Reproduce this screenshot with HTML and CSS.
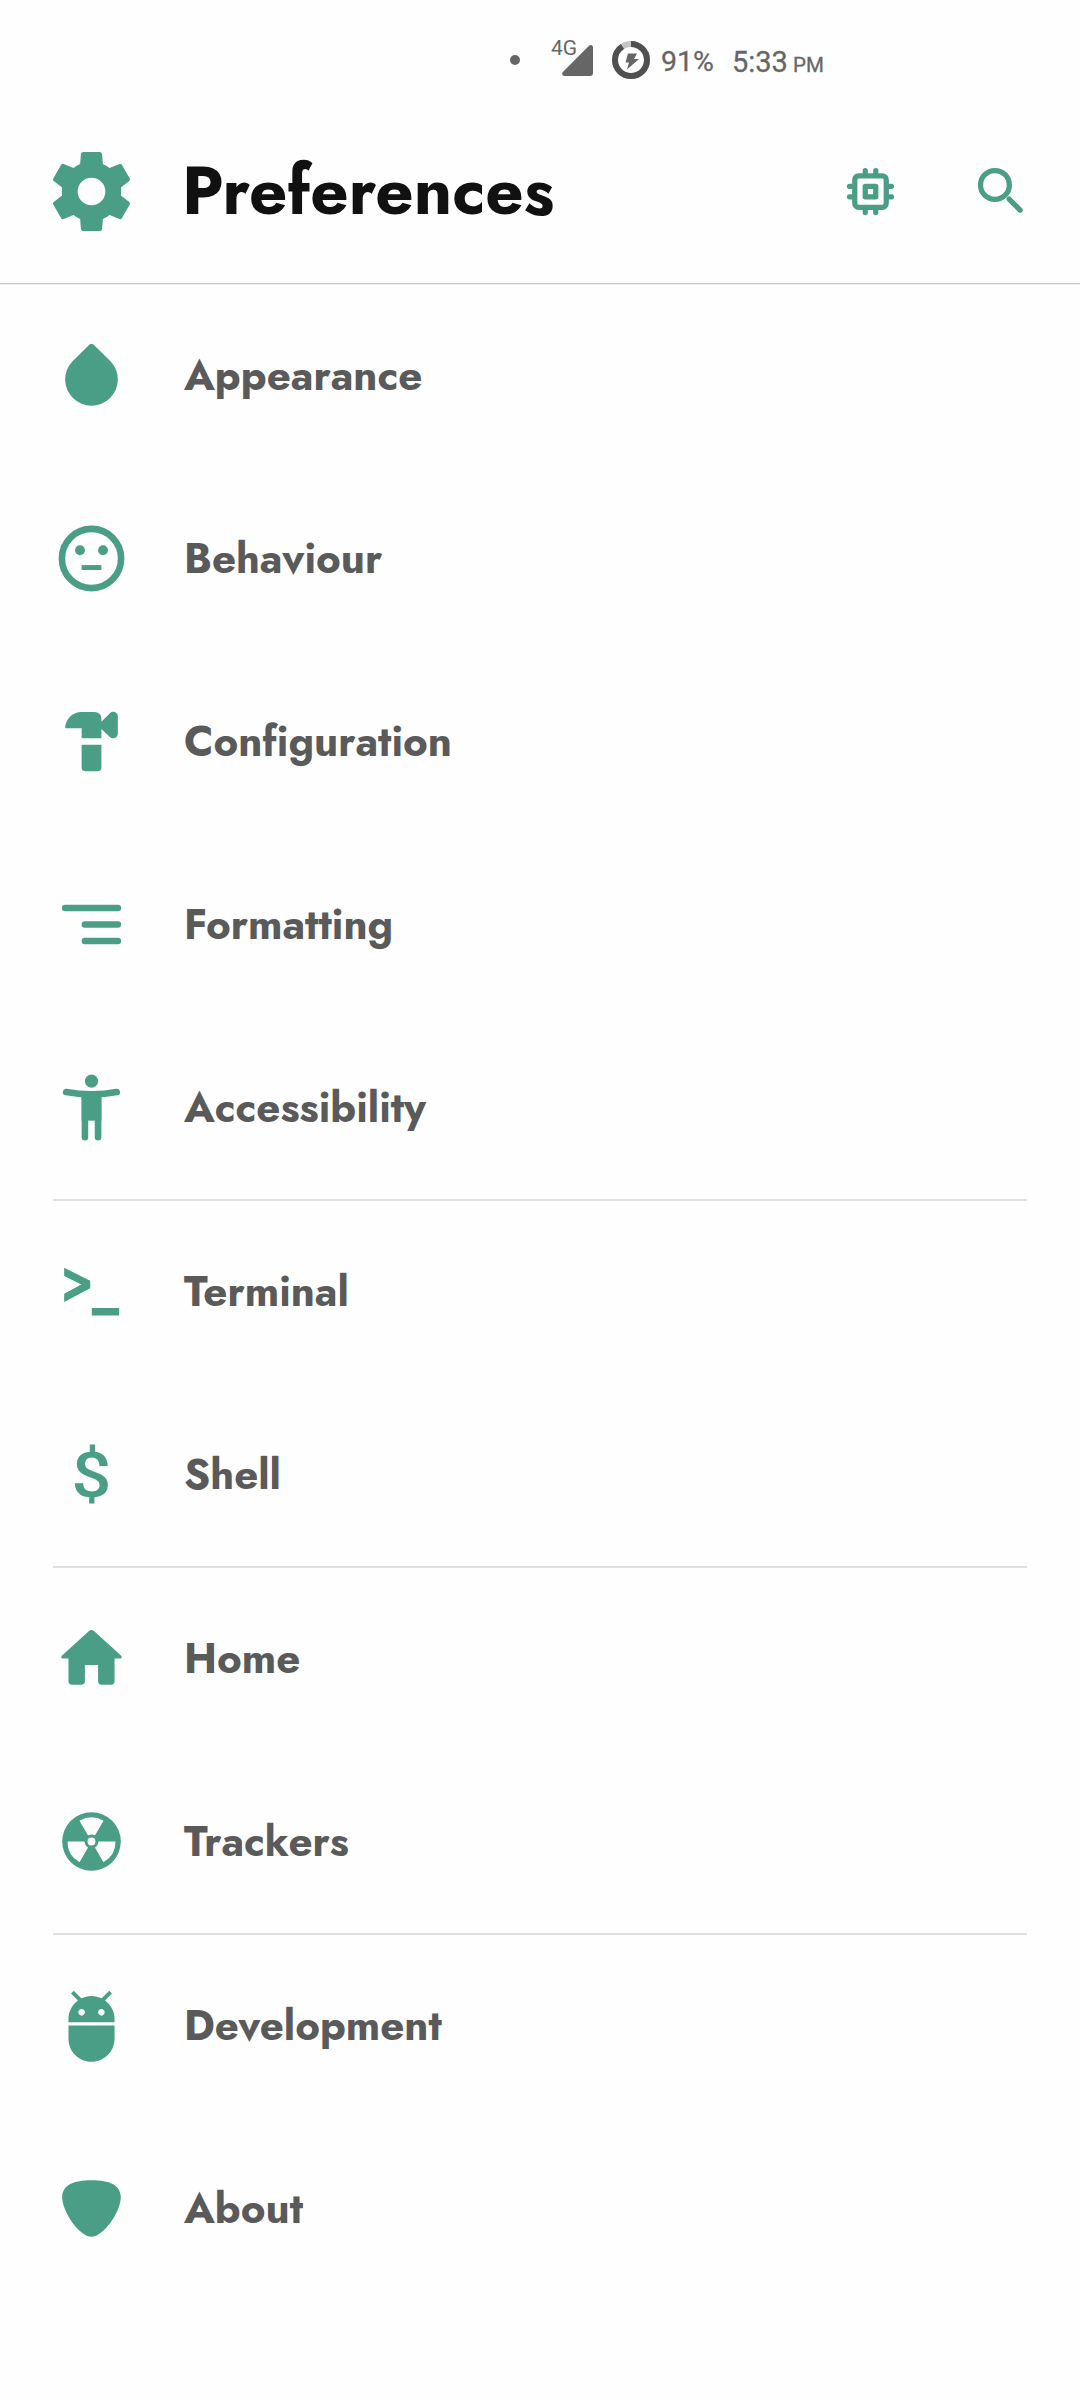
FILE: index.html
```html
<!DOCTYPE html>
<html lang="en">
<head>
<meta charset="utf-8">
<title>Preferences</title>
<link rel="stylesheet" href="styles.css">
</head>
<body>
<div class="status">
  <svg class="dot" viewBox="0 0 10 10"><circle cx="5" cy="5" r="5"/></svg>
  <div class="signal">
    <span class="network">4G</span>
    <svg viewBox="0 0 31 31"><path d="M27 .8C28.700-.6 31 .2 31 2.500V28a3 3 0 0 1-3 3H2.500C.2 31-.6 28.700.8 27z"/></svg>
  </div>
  <svg class="battery" viewBox="0 0 38 38"><circle class="track" cx="19" cy="19" r="16"/><circle class="charge" cx="19" cy="19" r="16" pathLength="100"/><path d="M16 12.500h9l-3 5.500h5L15 28.500l2-7h-3.500z"/></svg>
  <span class="percent">91%</span>
  <span class="time">5:33</span><span class="ampm">PM</span>
</div>
<header class="header">
  <svg class="gear" viewBox="0 0 24 24"><path d="M19.430 12.980c.04-.32.07-.64.07-.98s-.03-.66-.07-.98l2.110-1.650c.19-.15.24-.42.12-.64l-2-3.460c-.12-.22-.39-.3-.61-.22l-2.490 1c-.52-.4-1.080-.73-1.690-.98l-.18-2.350C14.650 2.280 14.450 2 14 2h-4c-.45 0-.65.28-.69.72l-.18 2.350c-.61.25-1.170.59-1.690.98l-2.490-1c-.23-.09-.49 0-.61.22l-2 3.460c-.13.22-.07.49.12.64l2.110 1.650c-.04.32-.07.65-.07.98s.03.66.07.98l-2.110 1.650c-.19.15-.24.42-.12.64l2 3.460c.12.22.39.3.61.22l2.490-1c.52.4 1.080.73 1.690.98l.18 2.350c.04.44.24.72.69.72h4c.45 0 .65-.28.69-.72l.18-2.350c.61-.25 1.170-.59 1.690-.98l2.490 1c.23.09.49 0 .61-.22l2-3.460c.12-.22.07-.49-.12-.64zM12 15.500a3.500 3.500 0 1 1 0-7 3.500 3.500 0 0 1 0 7z"/></svg>
  <h1 class="title">Preferences</h1>
  <svg class="action" viewBox="0 0 24 24"><g class="line"><rect x="6" y="6" width="12" height="12" rx="1.500"/><path d="M10 4v1M14 4v1M10 19v1M14 19v1M4 10h1M4 14h1M19 10h1M19 14h1"/></g><path fill-rule="evenodd" d="M10 9h4a1 1 0 0 1 1 1v4a1 1 0 0 1-1 1h-4a1 1 0 0 1-1-1v-4a1 1 0 0 1 1-1zm1 2v2h2v-2z"/></svg>
  <svg class="action search" viewBox="0 0 24 24"><g class="line"><circle cx="9.500" cy="9.500" r="5.500"/><path d="M14.900 14.900l4.200 4.200"/></g></svg>
</header>
<main>
  <section class="group">
    <div class="row"><svg viewBox="0 0 24 24"><path d="M17.900 7.800L12.600 2.600q-.6-.5-1.200 0L6.100 7.800A8 8 0 1 0 17.900 7.800z"/></svg><span>Appearance</span></div>
    <div class="row"><svg viewBox="0 0 24 24"><circle class="ring" cx="12" cy="12" r="9"/><circle cx="8.500" cy="9.500" r="1.500"/><circle cx="15.500" cy="9.500" r="1.500"/><path d="M9 14h6v1.500H9z"/></svg><span>Behaviour</span></div>
    <div class="row"><svg viewBox="0 0 24 24"><path d="M13 3H9C6.200 3 4 5.200 4 8h5v3h6V8.200l2.600 2.400c.9.9 2.400.3 2.400-1V4.400c0-1.300-1.500-1.900-2.400-1L15 6V5a2 2 0 0 0-2-2zM9 13h6v7a1 1 0 0 1-1 1h-4a1 1 0 0 1-1-1z"/></svg><span>Configuration</span></div>
    <div class="row"><svg viewBox="0 0 24 24"><path class="line" d="M4 7h16M10 12h10M10 17h10"/></svg><span>Formatting</span></div>
    <div class="row"><svg viewBox="0 0 24 24"><circle cx="12" cy="4" r="2"/><path class="line" d="M4.300 7.300Q8 8 12 8t7.700-.7M10 9v12M14 9v12"/><path d="M9 8h6v8H9z"/></svg><span>Accessibility</span></div>
  </section>
  <section class="group">
    <div class="row"><svg viewBox="0 0 24 24"><path d="M3.700 4.800l7.900 3.900V11l-7.900 4.200v-2.500l5.200-2.800-5.200-2.600zM12.100 17h8.300v2.300h-8.300z"/></svg><span>Terminal</span></div>
    <div class="row"><svg viewBox="0 0 24 24"><text class="dollar" transform="translate(12 18.700) scale(1.120 1)">$</text></svg><span>Shell</span></div>
  </section>
  <section class="group">
    <div class="row"><svg viewBox="0 0 24 24"><path d="M10 19v-5h4v5c0 .55.45 1 1 1h3c.55 0 1-.45 1-1v-7h1.700c.46 0 .68-.57.33-.87L12.670 3.600c-.38-.34-.96-.34-1.340 0l-8.360 7.530c-.34.3-.13.87.33.87H5v7c0 .55.45 1 1 1h3c.55 0 1-.45 1-1z"/></svg><span>Home</span></div>
    <div class="row"><svg viewBox="0 0 24 24"><path fill-rule="evenodd" d="M3.100 12a8.900 8.900 0 1 1 17.800 0 8.900 8.900 0 1 1-17.800 0zM8.350 5.680A7.300 7.300 0 0 1 15.650 5.680L13.050 10.180A2.100 2.100 0 0 0 10.950 10.180zM4.700 12A7.300 7.300 0 0 0 8.350 18.320L10.950 13.820A2.100 2.100 0 0 1 9.900 12zM19.300 12A7.300 7.300 0 0 1 15.650 18.320L13.050 13.820A2.100 2.100 0 0 0 14.100 12zM10.800 12a1.200 1.200 0 1 0 2.400 0 1.200 1.200 0 1 0-2.400 0z"/></svg><span>Trackers</span></div>
  </section>
  <section class="group">
    <div class="row"><svg viewBox="0 0 24 24"><path d="M5 16c0 3.870 3.130 7 7 7s7-3.130 7-7v-4H5v4zM16.120 4.370l2.100-2.100-.82-.83-2.300 2.310C14.160 3.280 13.120 3 12 3s-2.160.28-3.090.75L6.600 1.440l-.82.83 2.100 2.100C6.140 5.640 5 7.680 5 10v1h14v-1c0-2.320-1.140-4.360-2.880-5.630zM9 9c-.55 0-1-.45-1-1s.45-1 1-1 1 .45 1 1-.45 1-1 1zm6 0c-.55 0-1-.45-1-1s.45-1 1-1 1 .45 1 1-.45 1-1 1z"/></svg><span>Development</span></div>
    <div class="row"><svg viewBox="0 0 24 24"><path d="M12 3.400c5.400 0 8.900 1.400 8.900 5.200 0 4.400-5.200 12-8.900 12s-8.900-7.600-8.900-12c0-3.800 3.500-5.200 8.900-5.200z"/></svg><span>About</span></div>
  </section>
</main>
</body>
</html>
```
FILE: styles.css
```css
body {
  margin: 0;
  width: 1080px;
  height: 2400px;
  overflow: hidden;
  background: #fefefe;
  color: #5a5a5a;
  font-family: Jost, Lato, "Open Sans", sans-serif;
}
svg { display: block; flex: none; fill: #4a9e86; }
.line, .ring { fill: none; stroke: #4a9e86; stroke-width: 2; stroke-linecap: round; }

.status {
  box-sizing: border-box;
  height: 100px;
  padding: 39px 0 0 510px;
  display: flex;
  align-items: flex-start;
  font-family: Roboto, sans-serif;
  color: #666;
}
.status svg { fill: #666; }
.status span { line-height: 46px; white-space: nowrap; }
.dot { width: 10px; height: 10px; margin-top: 16px; }
.signal { position: relative; margin: 6px 0 0 42px; width: 31px; height: 31px; }
.signal svg { width: 31px; height: 31px; }
.status .network { position: absolute; left: -11px; top: -8px; font-size: 21px; line-height: 22px; }
.battery { width: 38px; height: 38px; margin: 2px 0 0 19px; }
.battery circle { fill: none; stroke-width: 6; }
.battery .track { stroke: #c4c4c4; }
.battery .charge { stroke: #505050; stroke-dasharray: 91 9; transform: rotate(-90deg); transform-origin: 19px 19px; }
.percent { width: 71px; margin-left: 11px; font-size: 28.5px; -webkit-text-stroke: 0.3px #666; }
.time { width: 61px; font-size: 29px; -webkit-text-stroke: 0.3px #666; }
.ampm { padding-top: 3px; font-size: 20.5px; -webkit-text-stroke: 0.3px #666; }

.header {
  box-sizing: border-box;
  height: 184px;
  padding-left: 44px;
  border-bottom: 1px solid #c9c9c9;
  box-shadow: 0 1px 0 #ededed;
  display: flex;
  align-items: center;
}
.gear { width: 95px; height: 95px; }
.title {
  margin: 0 0 0 43px;
  padding-bottom: 2px;
  width: 657px;
  font-size: 67px;
  font-weight: 700;
  line-height: 80px;
  color: #111;
}
.action { width: 63px; height: 63px; }
.search { margin-left: 68px; }

.group + .group { position: relative; padding-top: 1px; }
.group + .group::before {
  content: "";
  position: absolute;
  left: 53px;
  right: 53px;
  top: 0;
  height: 2px;
  background: #e0e0e0;
}
.row {
  height: 183px;
  padding-left: 52px;
  display: flex;
  align-items: center;
  gap: 53px;
  font-size: 42px;
  font-weight: 700;
}
.row svg { width: 79px; height: 79px; }
.dollar { font: 500 19px Roboto, sans-serif; text-anchor: middle; }
```
